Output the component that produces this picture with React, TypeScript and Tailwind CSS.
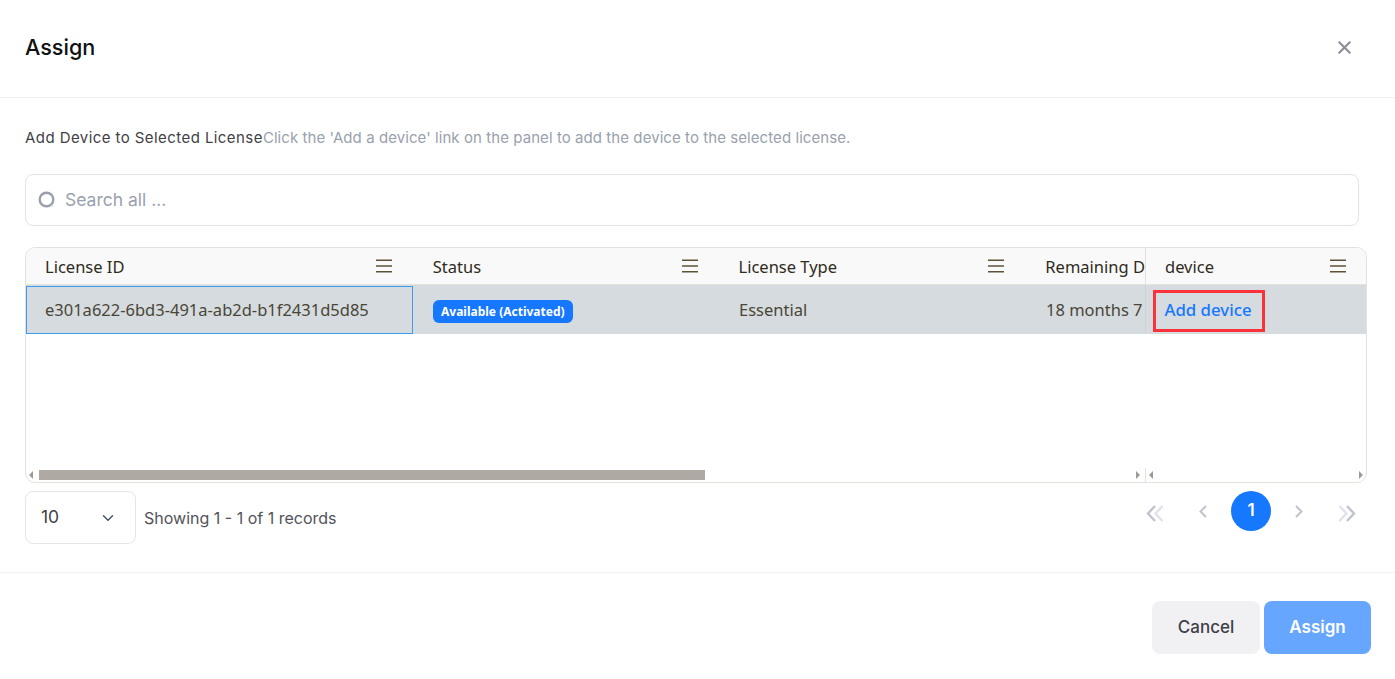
import { ChevronDown, X } from "lucide-react";

const columns = [
  { label: "License ID", width: "w-[387px]", cell: "pl-[19px] pr-[21px]" },
  { label: "Status", width: "w-[307px]", cell: "pl-[20px] pr-[22px]" },
  { label: "License Type", width: "w-[306px]", cell: "pl-[19px] pr-[21px]" },
];

function ColumnMenu() {
  return (
    <svg width="16" height="14" viewBox="0 0 16 14" className="text-[#5c5337]">
      <path d="M0 1.3h16M0 7h16M0 12.7h16" stroke="currentColor" strokeWidth="1.6" />
    </svg>
  );
}

function ScrollArrow({ dir }: { dir: "left" | "right" }) {
  return (
    <span
      className={
        dir === "left"
          ? "h-0 w-0 border-y-[4px] border-r-[4px] border-y-transparent border-r-[#9b9b96]"
          : "h-0 w-0 border-y-[4px] border-l-[4px] border-y-transparent border-l-[#9b9b96]"
      }
    />
  );
}

function Chevron({ dir }: { dir: "left" | "right" }) {
  return (
    <svg width="8" height="13" viewBox="0 0 8 13" fill="none" stroke="#c0c3cf" strokeWidth="2">
      <path d={dir === "left" ? "M7 1L1.5 6.5L7 12" : "M1 1L6.5 6.5L1 12"} />
    </svg>
  );
}

function DoubleChevron({ dir }: { dir: "left" | "right" }) {
  const dark = dir === "left" ? "M9 1L2 8.5L9 16" : "M9 1L16 8.5L9 16";
  const light = dir === "left" ? "M16.5 1L9.5 8.5L16.5 16" : "M1.5 1L8.5 8.5L1.5 16";
  return (
    <svg width="18" height="17" viewBox="0 0 18 17" fill="none" strokeWidth="2.4" className="mt-[4px]">
      <path d={light} stroke="#e0e2e9" />
      <path d={dark} stroke="#c0c3cf" />
    </svg>
  );
}

export default function App() {
  return (
    <div className="flex h-[679px] w-full flex-col overflow-hidden bg-white font-['Inter',sans-serif]">
      <header className="flex h-[98px] shrink-0 items-center justify-between border-b border-[#f1f1f4] pb-[2px] pl-[25px] pr-[40px]">
        <h2 className="text-[21.6px] font-medium text-[#111]">Assign</h2>
        <X size={21} strokeWidth={2.4} className="text-[#8b8d98]" />
      </header>

      <main className="flex flex-col px-[25px]">
        <p className="mt-[30px] h-[20px] whitespace-nowrap text-[15px] leading-[20px] tracking-[0.43px] text-[#3f3f46]">
          Add Device to Selected License
          <span className="tracking-[0.07px] text-[#99a1ad]">Click the 'Add a device' link on the panel to add the device to the selected license.</span>
        </p>

        <div className="mt-[26px] flex h-[52px] w-[1334px] items-center gap-[9px] rounded-[8px] border border-[#e2e2ea] pl-[12px]">
          <svg width="18" height="18" viewBox="0 0 18 18" fill="none">
            <circle cx="8.5" cy="8.5" r="6.8" stroke="#9a9fae" strokeWidth="2.4" />
            <path d="M13.5 14l1.5 1.5" stroke="#d5d7de" strokeWidth="1.6" />
          </svg>
          <span className="text-[17.5px] text-[#9a9fae]">Search all ...</span>
        </div>

        <div className="mt-[21px] h-[236px] w-[1342px] overflow-hidden rounded-[10px] border border-[#e2e2dc] font-['Noto_Sans',sans-serif] text-[16.5px]">
          <div className="flex h-full">
            <div className="flex w-[1119px] shrink-0 flex-col">
              <div className="flex h-[37px] shrink-0 border-b border-[#e2e2dc] bg-[#f9f9f9]">
                {columns.map((col) => (
                  <div key={col.label} className={`flex items-center justify-between ${col.width} ${col.cell}`}>
                    <span className="mt-[2px] text-[#2f2b1c]">{col.label}</span>
                    <ColumnMenu />
                  </div>
                ))}
                <div className="flex flex-1 items-center whitespace-nowrap pl-[20px] text-[#2f2b1c]">
                  <span className="mt-[2px]">Remaining D</span>
                </div>
              </div>
              <div className="flex h-[49px] shrink-0 items-center bg-[#d5dbdf] text-[#4a4636]">
                <div className="flex h-[48px] w-[387px] items-center border border-[#3b9cf0] pl-[18px] pt-[2px]">e301a622-6bd3-491a-ab2d-b1f2431d5d85</div>
                <div className="mt-[2px] w-[307px] pl-[20px]">
                  <span className="inline-flex h-[23px] items-center rounded-[6px] bg-[#1677ff] px-[8px] text-[12px] font-bold text-white">Available (Activated)</span>
                </div>
                <div className="w-[306px] pl-[19px] pt-[2px]">Essential</div>
                <div className="flex-1 overflow-hidden whitespace-nowrap pl-[20px] pt-[2px]">18 months 7</div>
              </div>
              <div className="flex-1" />
              <div className="flex h-[13px] shrink-0 items-center pl-[3px] pr-[5px]">
                <ScrollArrow dir="left" />
                <div className="ml-[6px] h-[10px] w-[666px] bg-[#aeaaa3]" />
                <span className="flex-1" />
                <ScrollArrow dir="right" />
              </div>
              <div className="h-[1px] shrink-0" />
            </div>

            <div className="flex flex-1 flex-col">
              <div className="flex h-[37px] shrink-0 items-center justify-between border-b border-l border-[#e2e2dc] bg-[#f9f9f9] pl-[19px] pr-[20px]">
                <span className="mt-[2px] text-[#2f2b1c]">device</span>
                <ColumnMenu />
              </div>
              <div className="flex h-[49px] shrink-0 items-center border-l border-[#cdd3d6] bg-[#d5dbdf] pl-[7px]">
                <a className="mt-[3px] flex h-[42px] w-[112px] items-center justify-center border-[3px] border-[#f93339] pb-[2px] pr-[2px] text-[16.8px] font-medium text-[#1677ff]">Add device</a>
              </div>
              <div className="flex-1" />
              <div className="flex h-[13px] shrink-0 items-center justify-between border-l border-[#e2e2dc] px-[3px]">
                <ScrollArrow dir="left" />
                <ScrollArrow dir="right" />
              </div>
              <div className="h-[1px] shrink-0 border-l border-[#e2e2dc]" />
            </div>
          </div>
        </div>

        <div className="mt-[8px] flex h-[53px] w-[1342px] items-start justify-between">
          <div className="flex items-center gap-[8px]">
            <div className="flex h-[53px] w-[111px] items-center justify-between rounded-[8px] border border-[#e5e5ec] pl-[15px] pr-[18px]">
              <span className="text-[17.5px] text-[#3f3f46]">10</span>
              <ChevronDown size={18} className="text-[#4b5563]" />
            </div>
            <span className="text-[16px] text-[#52525b]">Showing 1 - 1 of 1 records</span>
          </div>
          <div className="flex h-[40px] items-center pr-[11px]">
            <DoubleChevron dir="left" />
            <span className="ml-[35px]"><Chevron dir="left" /></span>
            <div className="ml-[24px] flex h-[40px] w-[40px] items-center justify-center rounded-full bg-[#1677ff] text-[17px] font-semibold text-white">1</div>
            <span className="ml-[24px]"><Chevron dir="right" /></span>
            <span className="ml-[35px]"><DoubleChevron dir="right" /></span>
          </div>
        </div>
      </main>

      <footer className="mt-[28px] flex flex-1 items-start justify-end gap-[4px] border-t border-[#f1f1f4] pr-[24px] pt-[28px]">
        <button className="h-[53px] w-[108px] rounded-[8px] bg-[#f1f1f4] text-[17px] font-medium text-[#3f3f46]">Cancel</button>
        <button className="h-[53px] w-[107px] rounded-[8px] bg-[#66a6ff] text-[17px] font-semibold text-white">Assign</button>
      </footer>
    </div>
  );
}
